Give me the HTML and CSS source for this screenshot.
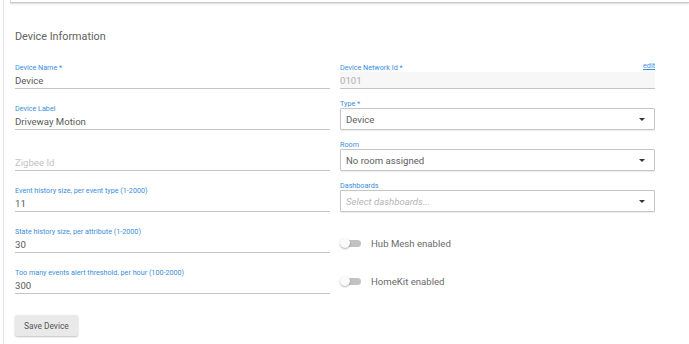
FILE: index.html
```html
<!DOCTYPE html>
<html lang="en">
<head>
    <meta charset="UTF-8">
    <meta name="viewport" content="width=device-width, initial-scale=1.0">
    <title>Device Information</title>
    <link rel="stylesheet" href="styles.css">
</head>
<body>

<div class="frame">
    <div class="top-card"></div>

    <div class="content">
        <h3 class="title">Device Information</h3>

        <div class="cols">
            <!-- Left column -->
            <div class="col">
                <div class="field">
                    <label class="label">Device Name *</label>
                    <input class="text-input" type="text" value="Device">
                </div>
                <div class="field">
                    <label class="label">Device Label</label>
                    <input class="text-input" type="text" value="Driveway Motion">
                </div>
                <div class="field">
                    <label class="label"></label>
                    <input class="text-input" type="text" placeholder="Zigbee Id">
                </div>
                <div class="field">
                    <label class="label">Event history size, per event type (1-2000)</label>
                    <input class="text-input" type="text" value="11">
                </div>
                <div class="field">
                    <label class="label">State history size, per attribute (1-2000)</label>
                    <input class="text-input" type="text" value="30">
                </div>
                <div class="field">
                    <label class="label">Too many events alert threshold, per hour (100-2000)</label>
                    <input class="text-input" type="text" value="300">
                </div>
            </div>

            <!-- Right column -->
            <div class="col">
                <div class="field short">
                    <div class="label-row">
                        <label class="label">Device Network Id *</label>
                        <a class="edit-link" href="#">edit</a>
                    </div>
                    <input class="text-input disabled" type="text" value="0101" readonly>
                </div>
                <div class="field short">
                    <label class="label">Type *</label>
                    <div class="select"><span>Device</span><i class="arrow"></i></div>
                </div>
                <div class="field short">
                    <label class="label">Room</label>
                    <div class="select"><span>No room assigned</span><i class="arrow"></i></div>
                </div>
                <div class="field short">
                    <label class="label">Dashboards</label>
                    <div class="select"><span class="placeholder">Select dashboards...</span><i class="arrow"></i></div>
                </div>

                <div class="switch-row first">
                    <div class="switch"><span class="track"></span><span class="knob"></span></div>
                    <span class="switch-text">Hub Mesh enabled</span>
                </div>
                <div class="switch-row">
                    <div class="switch"><span class="track"></span><span class="knob"></span></div>
                    <span class="switch-text">HomeKit enabled</span>
                </div>
            </div>
        </div>

        <button class="save-btn">Save Device</button>
    </div>
</div>

</body>
</html>
```

FILE: styles.css
```css
body {
    margin: 0;
    background: #fff;
    font-family: Roboto, "Liberation Sans", sans-serif;
    overflow: hidden;
}

.frame {
    margin-left: 3px;
    height: 344px;
    border-left: 1px solid #e6e6e6;
}

.top-card {
    margin-left: 6px;
    height: 2px;
    border-left: 1px solid #dcdcdc;
    border-bottom: 1px solid #c9c9c9;
    box-shadow: 0 1px 2px rgba(0, 0, 0, 0.15);
}

.content {
    padding-left: 11px;
    width: 640px;
}

.title {
    margin: 27px 0 20px;
    font-size: 10.8px;
    line-height: 13px;
    font-weight: 400;
    color: #616161;
}

.cols {
    display: flex;
    gap: 10px;
}

.col {
    flex: 1;
    display: flex;
    flex-direction: column;
}

.field {
    display: flex;
    flex-direction: column;
    margin-bottom: 15px;
}

.field.short {
    margin-bottom: 10px;
}

.label {
    display: block;
    height: 9px;
    font-size: 7.2px;
    line-height: 9px;
    color: #3a8ddb;
}

.label-row {
    display: flex;
    justify-content: space-between;
}

.edit-link {
    font-size: 7.2px;
    line-height: 5px;
    color: #3a8ddb;
}

.text-input {
    box-sizing: border-box;
    width: 100%;
    height: 17px;
    padding: 0;
    border: none;
    border-bottom: 1px solid #c4c4c4;
    background: transparent;
    font-family: inherit;
    font-size: 9.6px;
    line-height: 16px;
    color: #5a5a5a;
    outline: none;
}

.text-input::placeholder {
    color: #c2c2c2;
}

.text-input.disabled {
    background: #f7f7f7;
    color: #b0b0b0;
}

.select {
    box-sizing: border-box;
    height: 22px;
    display: flex;
    align-items: center;
    justify-content: space-between;
    padding: 0 9px 0 5px;
    border: 1px solid #c6c6c6;
    border-radius: 1px;
    box-shadow: 0 1px 1px rgba(0, 0, 0, 0.08);
    font-size: 9.6px;
    color: #5e5e5e;
}

.select .placeholder {
    font-style: italic;
    color: #b5b5b5;
}

.arrow {
    width: 0;
    height: 0;
    border-left: 3px solid transparent;
    border-right: 3px solid transparent;
    border-top: 3px solid #333;
}

.switch-row {
    display: flex;
    align-items: center;
    gap: 10px;
    height: 20px;
    margin-top: 18px;
}

.switch-row.first {
    margin-top: 11px;
}

.switch {
    position: relative;
    width: 21px;
    height: 10px;
}

.track {
    position: absolute;
    left: 3px;
    top: 2px;
    width: 18px;
    height: 7px;
    border-radius: 4px;
    background: #c2c2c2;
}

.knob {
    position: absolute;
    left: 0;
    top: 0;
    width: 10px;
    height: 10px;
    border-radius: 50%;
    background: #fafafa;
    box-shadow: 0 1px 2px rgba(0, 0, 0, 0.3);
}

.switch-text {
    font-size: 9.6px;
    color: #6a6a6a;
}

.save-btn {
    margin-top: 6px;
    height: 21px;
    padding: 0 9px;
    border: none;
    border-radius: 2px;
    background: #e9e9e9;
    box-shadow: 0 1px 2px rgba(0, 0, 0, 0.25);
    font-family: inherit;
    font-size: 8.4px;
    color: #555;
    cursor: pointer;
}
```
